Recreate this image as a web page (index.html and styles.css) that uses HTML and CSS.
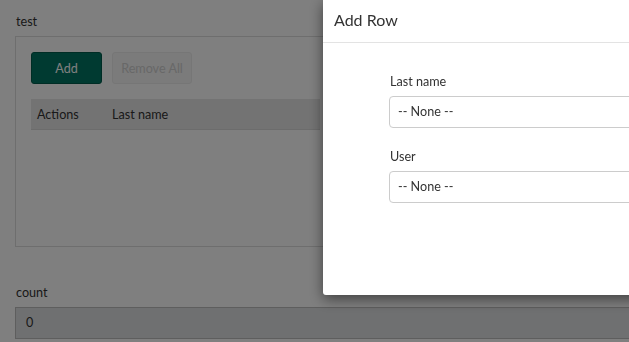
FILE: index.html
```html
<!DOCTYPE html>
<html lang="en">
<head>
    <meta charset="UTF-8">
    <meta name="viewport" content="width=device-width, initial-scale=1.0">
    <title>test</title>
    <link rel="stylesheet" href="styles.css">
</head>
<body>
    <div class="page">
        <div class="field">
            <label class="field-label">test</label>
            <div class="grid-box">
                <div class="grid-actions">
                    <button class="btn btn-primary">Add</button>
                    <button class="btn btn-disabled" disabled>Remove All</button>
                </div>
                <div class="grid-head">
                    <span class="col-actions">Actions</span>
                    <span>Last name</span>
                </div>
            </div>
        </div>
        <div class="field field-count">
            <label class="field-label">count</label>
            <div class="readonly-input">0</div>
        </div>
    </div>

    <div class="backdrop"></div>
    <div class="modal">
        <div class="modal-header">Add Row</div>
        <div class="modal-body">
            <div class="form-group">
                <label class="form-label">Last name</label>
                <div class="select">-- None --</div>
            </div>
            <div class="form-group">
                <label class="form-label">User</label>
                <div class="select">-- None --</div>
            </div>
        </div>
    </div>
</body>
</html>
```

FILE: styles.css
```css
body {
    font-family: Lato, "Open Sans", sans-serif;
    font-size: 12.6px;
    color: #333;
    background: #fff;
    margin: 0;
    overflow: hidden;
}
.page {
    padding: 13px 0 0 15px;
    width: 700px;
}
.field-label {
    display: block;
    line-height: 18px;
    margin: 0 0 5px 1px;
}
.grid-box {
    border: 1px solid #ddd;
    height: 179px;
    padding: 15px;
}
.grid-actions {
    display: flex;
    gap: 10px;
    margin-bottom: 15px;
}
.btn {
    height: 32px;
    font-family: inherit;
    font-size: 12.6px;
    border-radius: 3px;
    padding: 0;
}
.btn-primary {
    width: 71px;
    background: #007562;
    color: #fff;
    border: 1px solid #005a4a;
}
.btn-disabled {
    width: 80px;
    background: #f6f6f6;
    color: #d0d0d0;
    border: 1px solid #ececec;
}
.grid-head {
    box-sizing: border-box;
    display: flex;
    align-items: center;
    height: 31px;
    width: 289px;
    background: #e6e6e6;
    border-bottom: 1px solid #d8d8d8;
    padding-left: 6px;
}
.col-actions {
    width: 75px;
}
.field-count {
    margin-top: 37px;
}
.field-count .field-label {
    margin-bottom: 5px;
}
.readonly-input {
    height: 30px;
    line-height: 30px;
    background: #dfe0e2;
    border: 1px solid #bdbdbd;
    padding-left: 10px;
}
.backdrop {
    position: fixed;
    inset: 0;
    background: rgba(0, 0, 0, 0.5);
}
.modal {
    position: fixed;
    left: 323px;
    top: 0;
    width: 420px;
    height: 295px;
    background: #fff;
    border-radius: 0 0 0 3px;
    box-shadow: 0 4px 14px rgba(0, 0, 0, 0.5);
}
.modal-header {
    height: 42px;
    line-height: 40px;
    font-size: 16px;
    padding-left: 11px;
    border-bottom: 1px solid #e3e3e3;
}
.modal-body {
    padding: 30px 0 0 66px;
}
.form-group {
    margin-bottom: 20px;
}
.form-label {
    display: block;
    line-height: 18px;
    margin: 0 0 5px 1px;
}
.select {
    height: 30px;
    line-height: 30px;
    border: 1px solid #ccc;
    border-radius: 4px;
    padding-left: 8px;
}
```
